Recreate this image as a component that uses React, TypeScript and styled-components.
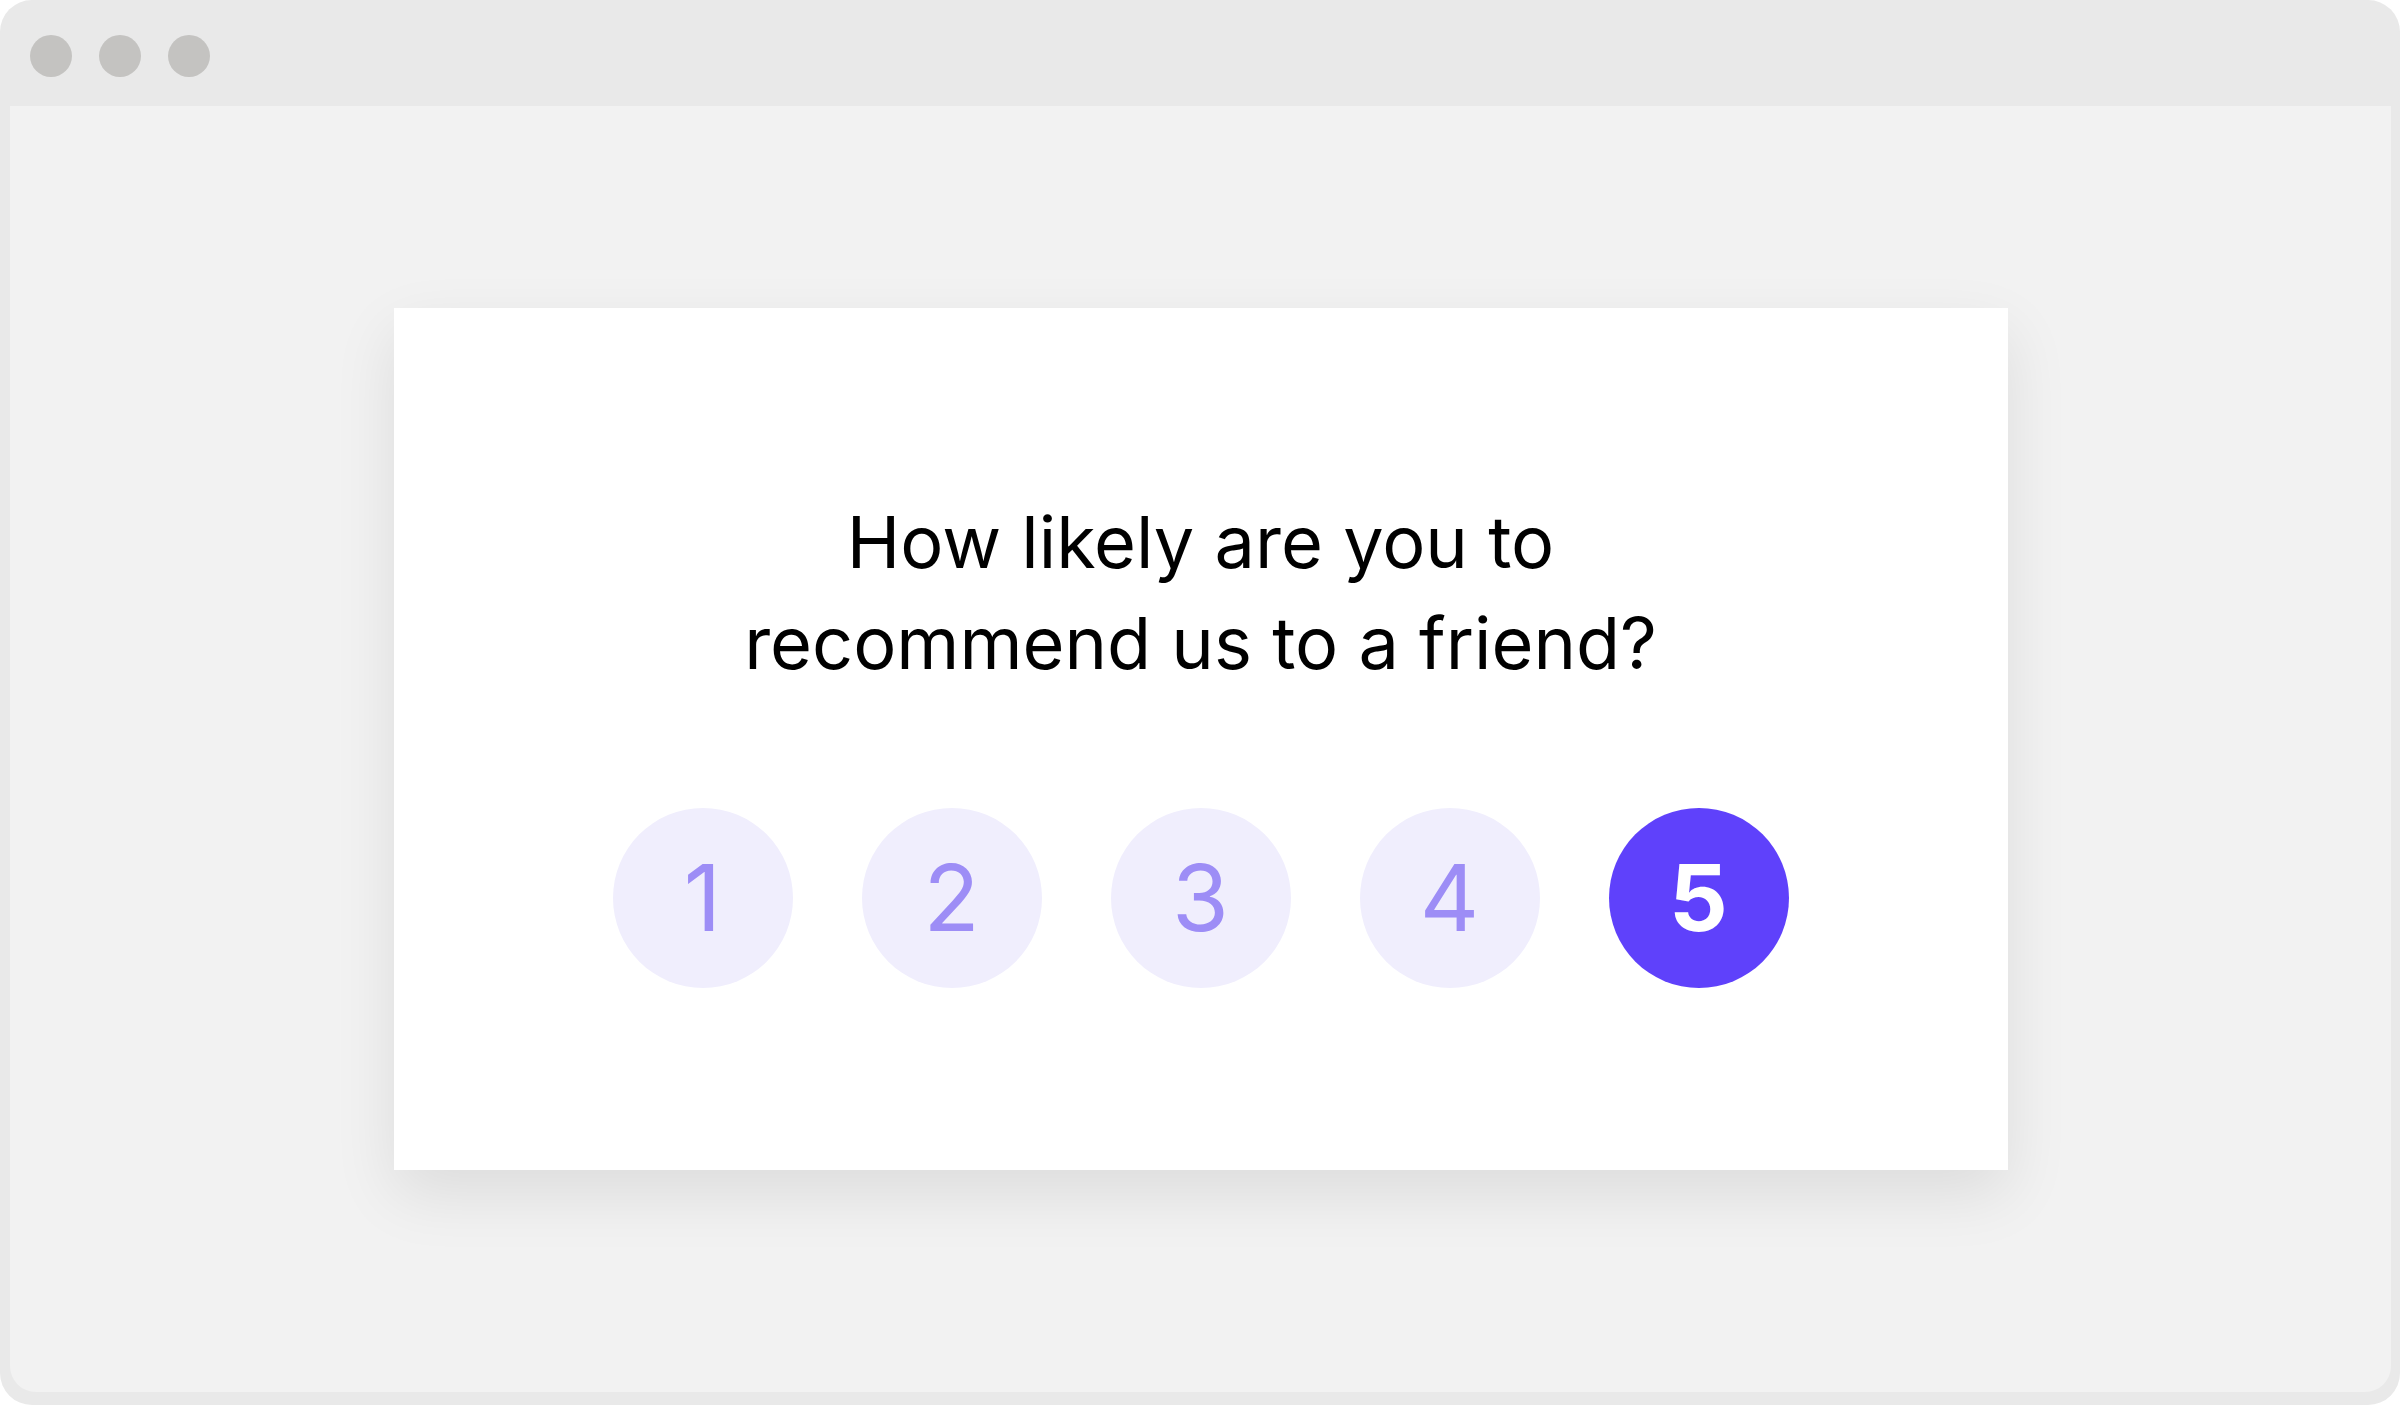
import styled, { createGlobalStyle } from "styled-components"

const GlobalStyle = createGlobalStyle`
  html, body {
    margin: 0;
    padding: 0;
    background: #ffffff;
  }
  #root {
    height: 100vh;
  }
`

const Window = styled.div`
  height: 100vh;
  display: flex;
  flex-direction: column;
  background: #e9e9e9;
  border-radius: 32px;
  overflow: hidden;
  font-family: Inter, "Noto Sans", sans-serif;
`

const TitleBar = styled.div`
  height: 106px;
  flex-shrink: 0;
  display: flex;
  align-items: flex-start;
  gap: 27px;
  padding: 35px 0 0 30px;
  box-sizing: border-box;
`

const Dot = styled.span`
  width: 42px;
  height: 42px;
  border-radius: 50%;
  background: #c4c3c1;
`

const Viewport = styled.main`
  flex: 1;
  margin: 0 9px 13px 10px;
  background: #f2f2f2;
  border-radius: 0 0 26px 26px;
  display: flex;
  justify-content: center;
  align-items: flex-start;
  padding-top: 202px;
`

const Card = styled.section`
  width: 1614px;
  height: 862px;
  background: #ffffff;
  box-shadow: 0 24px 60px rgba(0, 0, 0, 0.09);
  display: flex;
  flex-direction: column;
  align-items: center;
`

const Question = styled.h1`
  margin: 183px 0 0;
  font-size: 72px;
  line-height: 101px;
  font-weight: 400;
  color: #000000;
  text-align: center;
`

const Scale = styled.div`
  margin-top: 115px;
  display: flex;
  gap: 69px;
`

const Choice = styled.button<{ $active?: boolean }>`
  width: 180px;
  height: 180px;
  border: 0;
  padding: 0;
  border-radius: 50%;
  display: flex;
  align-items: center;
  justify-content: center;
  font-family: inherit;
  font-size: 92px;
  line-height: 1;
  font-weight: ${(p) => (p.$active ? 700 : 400)};
  background: ${(p) => (p.$active ? "#5f41fb" : "#f0eefd")};
  color: ${(p) => (p.$active ? "#ffffff" : "#9d8df6")};
  cursor: pointer;
`

const App = () => {
  const selected = 5

  return (
    <>
      <GlobalStyle />
      <Window>
        <TitleBar>
          <Dot />
          <Dot />
          <Dot />
        </TitleBar>
        <Viewport>
          <Card>
            <Question>
              How likely are you to
              <br />
              recommend us to a friend?
            </Question>
            <Scale>
              {[1, 2, 3, 4, 5].map((n) => (
                <Choice key={n} $active={n === selected}>
                  {n}
                </Choice>
              ))}
            </Scale>
          </Card>
        </Viewport>
      </Window>
    </>
  )
}

export default App
